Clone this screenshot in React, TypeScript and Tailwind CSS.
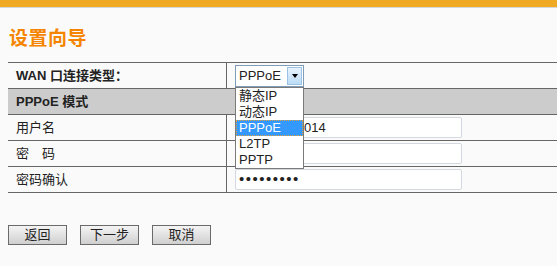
const font = { fontFamily: '"Liberation Sans", "Noto Sans CJK SC", sans-serif' };

const options = ["静态IP", "动态IP", "PPPoE", "L2TP", "PPTP"];

const TextInput = ({ value, type = "text" }: { value: string; type?: string }) => (
  <input
    readOnly
    type={type}
    value={value}
    className={
      type === "password"
        ? "h-[21px] w-[227px] rounded-[2px] border border-[#d4d8e0] bg-white px-[3px] text-[15px] tracking-[1.5px] text-[#222] outline-none"
        : "h-[21px] w-[227px] rounded-[2px] border border-[#d4d8e0] bg-white px-[3px] text-[13px] text-[#222] outline-none"
    }
    style={font}
  />
);

const Row = ({ label, children }: { label: string; children: React.ReactNode }) => (
  <div className="flex h-[26px] border-t border-[#666]">
    <div className="flex w-[219px] items-center border-r border-[#666] pl-[8px] text-[13px] text-[#222]">
      {label}
    </div>
    <div className="flex flex-1 items-center pl-[8px]">{children}</div>
  </div>
);

const Button = ({ label }: { label: string }) => (
  <button className="h-[20px] w-[59px] border border-[#6a6a6a] bg-gradient-to-b from-[#f4f4f4] via-[#e2e2e2] to-[#cfcfcf] text-[13px] leading-[18px] text-[#222]">
    {label}
  </button>
);

export default function App() {
  return (
    <div className="h-[266px] w-[557px] overflow-hidden bg-[#fafafa]" style={font}>
      <div className="h-[8px] border-b border-[#d6d6d6] bg-[#f0a923]" />
      <div className="pl-[9px] pt-[19px] text-[19px] font-bold leading-[24px] tracking-[0.5px] text-[#f58400]">设置向导</div>

      <div className="ml-[8px] mt-[11px]">
        <div className="flex h-[26px] border-t border-[#666]">
          <div className="flex w-[219px] items-center border-r border-[#666] pl-[8px] text-[13px] font-bold text-[#222]">
            WAN 口连接类型：
          </div>
          <div className="relative flex flex-1 items-center pl-[8px]">
            <div className="mt-[1px] flex h-[22px] w-[69px] items-stretch border border-[#7f9db9] bg-white">
              <span className="flex-1 pl-[3px] text-[13px] leading-[20px] text-[#222]">PPPoE</span>
              <span className="m-[1px] flex w-[15px] items-center justify-center border border-[#9cc3e6] bg-gradient-to-b from-[#e8f3fd] to-[#bcdcf6]">
                <span className="h-0 w-0 border-x-[3.5px] border-t-[4px] border-x-transparent border-t-black" />
              </span>
            </div>
            <div className="absolute left-[8px] top-[24px] z-10 w-[69px] border border-[#7a7a7a] bg-white">
              {options.map((o) => (
                <div
                  key={o}
                  className={
                    o === "PPPoE"
                      ? "h-[16px] border border-dotted border-[#e0a040] bg-[#3399ff] pl-[2px] text-[13px] leading-[14px] text-white"
                      : "h-[16px] pl-[3px] text-[13px] leading-[16px] text-[#222]"
                  }
                >
                  {o}
                </div>
              ))}
            </div>
          </div>
        </div>

        <div className="flex h-[26px] items-center border-t border-[#666] bg-[#cccccc] pl-[8px] text-[13px] font-bold text-[#222]">
          PPPoE 模式
        </div>

        <Row label="用户名">
          <TextInput value="075588882014" />
        </Row>
        <Row label="密　码">
          <TextInput type="password" value="123456789" />
        </Row>
        <Row label="密码确认">
          <TextInput type="password" value="123456789" />
        </Row>
        <div className="border-t border-[#666]" />
      </div>

      <div className="ml-[8px] mt-[32px] flex gap-[13px]">
        <Button label="返回" />
        <Button label="下一步" />
        <Button label="取消" />
      </div>
    </div>
  );
}
